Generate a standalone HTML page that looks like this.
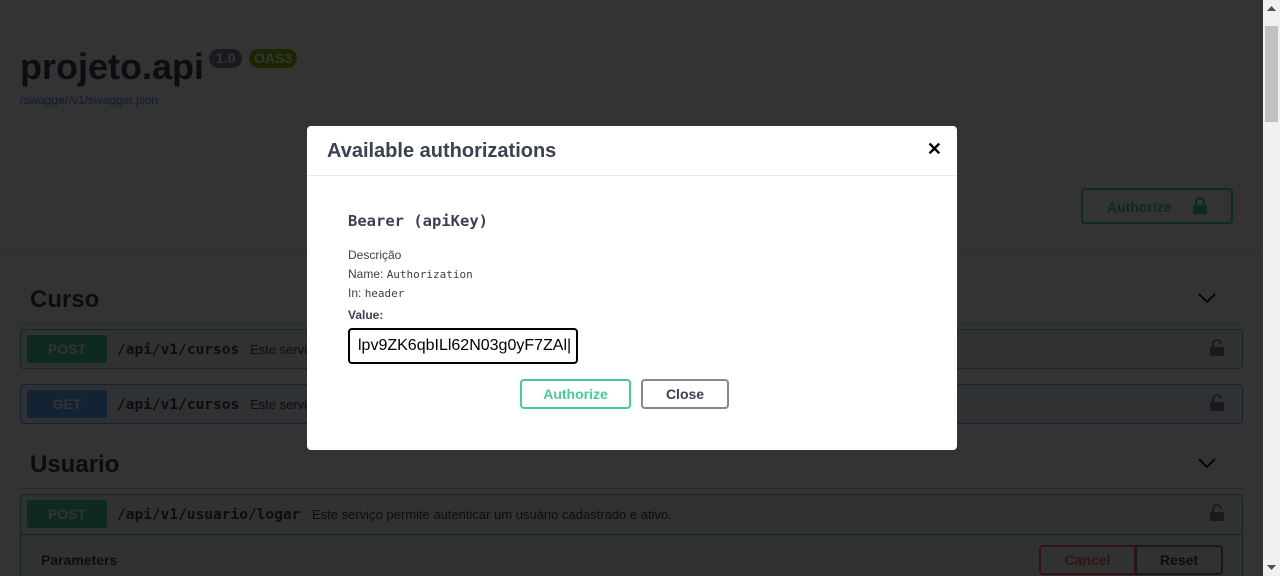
<!DOCTYPE html>
<html><head><meta charset="utf-8"><style>
*{box-sizing:border-box;margin:0;padding:0}
html,body{overflow:hidden}
body{width:1280px;height:576px;background:#fff;font-family:"Liberation Sans",sans-serif;color:#3b4151;position:relative}
.page{position:absolute;left:0;top:0;width:1263px;height:576px;overflow:hidden}
.mono{font-family:"DejaVu Sans Mono","Liberation Mono",monospace}
.title{position:absolute;left:20px;top:46px;font-size:36px;font-weight:bold;color:#3b4151}
.ver{position:absolute;left:209px;top:49px;background:#7d8492;color:#fff;border-radius:57px;font-size:14px;font-weight:bold;padding:2px 7px;height:19px;line-height:15px}
.oas{position:absolute;left:249px;top:49px;background:#89bf04;color:#fff;border-radius:57px;font-size:14px;font-weight:bold;padding:2px 5px;height:19px;line-height:15px}
.url{position:absolute;left:20px;top:93px;font-size:12px;color:#4990e2}
.hdrline{position:absolute;left:0;top:254px;width:1263px;height:1px;background:#e8e8e8}
.authbtn{position:absolute;left:1081px;top:188px;width:152px;height:36px;border:2px solid #49cc90;border-radius:4px;color:#49cc90;font-weight:bold;font-size:14px;padding:9px 0 0 24px}
.lock{position:absolute;width:14px;height:17px}
.sec{position:absolute;left:30px;font-size:24px;font-weight:bold}
.secline{position:absolute;left:20px;width:1223px;height:1px;background:#d8dbe0}
.chev{position:absolute;left:1198px;width:18px;height:10px}
.op{position:absolute;left:20px;width:1223px;height:40px;border:1px solid;border-radius:4px}
.post{border-color:#49cc90;background:#edfaf4}
.get{border-color:#61affe;background:#ebf3fb}
.m{position:absolute;left:6px;top:5px;width:80px;height:28px;border-radius:3px;color:#fff;font-weight:bold;font-size:14px;text-align:center;line-height:28px}
.path{position:absolute;left:96px;top:12px;font-size:14.5px;font-weight:bold;color:#3b4151}
.desc{position:absolute;top:12px;font-size:13px;color:#3b4151}
.overlay{position:absolute;left:0;top:0;width:1263px;height:576px;background:rgba(0,0,0,.8)}
.modal{position:absolute;left:307px;top:126px;width:650px;height:324px;background:#fff;border-radius:4px}
.mh{height:50px;border-bottom:1px solid #ebebeb;padding:14px 20px;font-size:20px;font-weight:bold}
.x{position:absolute;right:15px;top:13px;font-size:18px;font-weight:bold;color:#000}
.sb{position:absolute;left:1263px;top:0;width:17px;height:576px;background:#f1f1f1}
</style></head><body>
<div class="page">
<div class="title">projeto.api</div>
<div class="ver">1.0</div><div class="oas">OAS3</div>
<div class="url">/swagger/v1/swagger.json</div>
<div class="hdrline"></div>
<div class="authbtn">Authorize</div>
<svg class="lock" style="left:1193px;top:197px" viewBox="0 0 14 17"><path d="M3 8V5a4 4 0 0 1 8 0v3" fill="none" stroke="#49cc90" stroke-width="2"/><rect x="0" y="8" width="14" height="9" rx="1.5" fill="#49cc90"/></svg>

<div class="sec" style="top:286px">Curso</div>
<svg class="chev" style="top:293px" viewBox="0 0 18 10"><path d="M1 1l8 8 8-8" fill="none" stroke="#000" stroke-width="1.6"/></svg>
<div class="secline" style="top:323px"></div>
<div class="op post" style="top:329px"><div class="m" style="background:#49cc90">POST</div><div class="path mono">/api/v1/cursos</div><div class="desc" style="left:229px">Este serviço</div>
<svg class="lock" style="left:1189px;top:9px" viewBox="0 0 14 17"><path d="M3 8V5a4 4 0 0 1 8 0" fill="none" stroke="#7d8492" stroke-width="2"/><rect x="0" y="8" width="14" height="9" rx="1.5" fill="#7d8492"/></svg></div>
<div class="op get" style="top:384px"><div class="m" style="background:#61affe">GET</div><div class="path mono">/api/v1/cursos</div><div class="desc" style="left:229px">Este serviço</div>
<svg class="lock" style="left:1189px;top:9px" viewBox="0 0 14 17"><path d="M3 8V5a4 4 0 0 1 8 0" fill="none" stroke="#7d8492" stroke-width="2"/><rect x="0" y="8" width="14" height="9" rx="1.5" fill="#7d8492"/></svg></div>

<div class="sec" style="top:451px">Usuario</div>
<svg class="chev" style="top:458px" viewBox="0 0 18 10"><path d="M1 1l8 8 8-8" fill="none" stroke="#000" stroke-width="1.6"/></svg>
<div class="secline" style="top:488px"></div>
<div class="op post" style="top:494px;height:100px"><div class="m" style="background:#49cc90">POST</div><div class="path mono">/api/v1/usuario/logar</div><div class="desc" style="left:291px">Este serviço permite autenticar um usuário cadastrado e ativo.</div>
<svg class="lock" style="left:1189px;top:9px" viewBox="0 0 14 17"><path d="M3 8V5a4 4 0 0 1 8 0" fill="none" stroke="#7d8492" stroke-width="2"/><rect x="0" y="8" width="14" height="9" rx="1.5" fill="#7d8492"/></svg>
<div style="position:absolute;left:0;top:39px;width:1221px;height:1px;background:#49cc90"></div>
<div style="position:absolute;left:20px;top:57px;font-size:14px;font-weight:bold">Parameters</div>
<div style="position:absolute;left:1018px;top:50px;width:97px;height:30px;border:2px solid #ff6060;border-radius:4px 0 0 4px;color:#ff6060;font-weight:bold;font-size:14px;text-align:center;line-height:26px">Cancel</div>
<div style="position:absolute;left:1114px;top:50px;width:88px;height:30px;border:2px solid #888;border-radius:0 4px 4px 0;font-weight:bold;font-size:14px;text-align:center;line-height:26px">Reset</div>
</div>
</div>
<div class="overlay"></div>
<div class="modal">
<div class="mh">Available authorizations</div><div class="x">✕</div>
<div style="position:absolute;left:41px;top:86px;font-size:15.5px;font-weight:bold" class="mono">Bearer (apiKey)</div>
<div style="position:absolute;left:41px;top:120px;font-size:12px;line-height:19px">Descrição<br>Name: <span class="mono" style="font-size:11px">Authorization</span><br>In: <span class="mono" style="font-size:11px">header</span></div>
<div style="position:absolute;left:41px;top:182px;font-size:12px;font-weight:bold">Value:</div>
<div style="position:absolute;left:41px;top:202px;width:230px;height:36px;border:2px solid #000;border-radius:4px;font-size:16px;padding:7px 8px;color:#000;overflow:hidden;white-space:nowrap">lpv9ZK6qbILl62N03g0yF7ZAl|</div>
<div style="position:absolute;left:213px;top:253px;width:111px;height:30px;border:2px solid #49cc90;border-radius:4px;color:#49cc90;font-weight:bold;font-size:14px;text-align:center;line-height:26px">Authorize</div>
<div style="position:absolute;left:334px;top:253px;width:88px;height:30px;border:2px solid #888;border-radius:4px;font-weight:bold;font-size:14px;text-align:center;line-height:26px">Close</div>
</div>
<div class="sb">
<svg style="position:absolute;left:4px;top:6px" width="9" height="5"><path d="M0 5L4.5 0 9 5z" fill="#505050"/></svg>
<div style="position:absolute;left:2px;top:26px;width:13px;height:96px;background:#c1c1c1"></div>
<svg style="position:absolute;left:4px;top:565px" width="9" height="5"><path d="M0 0L4.5 5 9 0z" fill="#505050"/></svg>
</div>
</body></html>
